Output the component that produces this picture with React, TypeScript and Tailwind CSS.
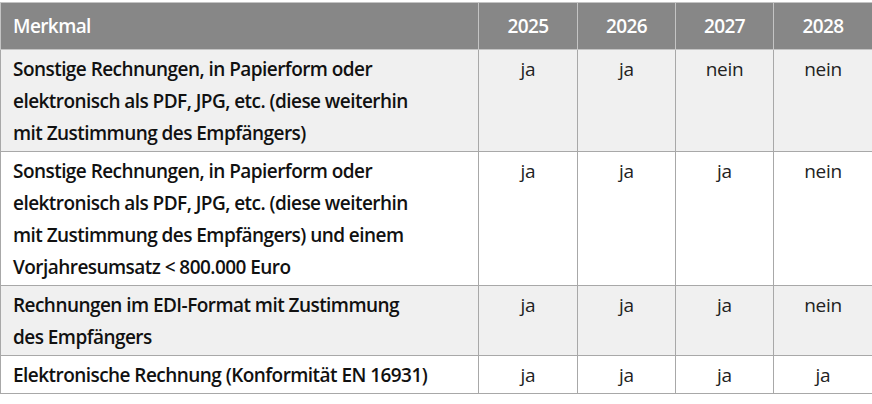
import React from 'react';

const years = ['2025', '2026', '2027', '2028'];

const rows = [
  {
    label: [
      'Sonstige Rechnungen, in Papierform oder',
      'elektronisch als PDF, JPG, etc. (diese weiterhin',
      'mit Zustimmung des Empfängers)',
    ],
    values: ['ja', 'ja', 'nein', 'nein'],
    shade: true,
  },
  {
    label: [
      'Sonstige Rechnungen, in Papierform oder',
      'elektronisch als PDF, JPG, etc. (diese weiterhin',
      'mit Zustimmung des Empfängers) und einem',
      'Vorjahresumsatz < 800.000 Euro',
    ],
    values: ['ja', 'ja', 'ja', 'nein'],
    shade: false,
  },
  {
    label: ['Rechnungen im EDI-Format mit Zustimmung', 'des Empfängers'],
    values: ['ja', 'ja', 'ja', 'nein'],
    shade: true,
  },
  {
    label: ['Elektronische Rechnung (Konformität EN 16931)'],
    values: ['ja', 'ja', 'ja', 'ja'],
    shade: false,
  },
];

export default function App() {
  return (
    <div className="w-[872px] h-[404px] bg-white pt-[2px] font-['Open_Sans',sans-serif]">
      <table className="w-[872px] border-collapse table-fixed">
        <colgroup>
          <col className="w-[478px]" />
          <col className="w-[99px]" />
          <col className="w-[98px]" />
          <col className="w-[98px]" />
          <col className="w-[99px]" />
        </colgroup>
        <thead>
          <tr className="h-[47px] bg-[#878787] text-white text-[19px] tracking-[-0.6px]">
            <th className="border border-[#c4c4c4] text-left pl-3 font-semibold">Merkmal</th>
            {years.map((y) => (
              <th key={y} className="border border-[#c4c4c4] text-center font-semibold">
                {y}
              </th>
            ))}
          </tr>
        </thead>
        <tbody>
          {rows.map((r, i) => (
            <tr key={i} className={r.shade ? 'bg-[#f0f0f0]' : 'bg-white'}>
              <td className="border border-[#a8a8a8] align-top pl-3 pt-[3px] pb-[2px] text-[19px] leading-[32px] tracking-[-0.55px] font-semibold text-[#111]">
                {r.label.map((l, k) => (
                  <div key={k} className="whitespace-nowrap">
                    {l}
                  </div>
                ))}
              </td>
              {r.values.map((v, j) => (
                <td
                  key={j}
                  className="border border-[#a8a8a8] align-top text-center pt-[3px] text-[19px] leading-[32px] tracking-[-0.3px] font-normal text-[#222]"
                >
                  {v}
                </td>
              ))}
            </tr>
          ))}
        </tbody>
      </table>
    </div>
  );
}
